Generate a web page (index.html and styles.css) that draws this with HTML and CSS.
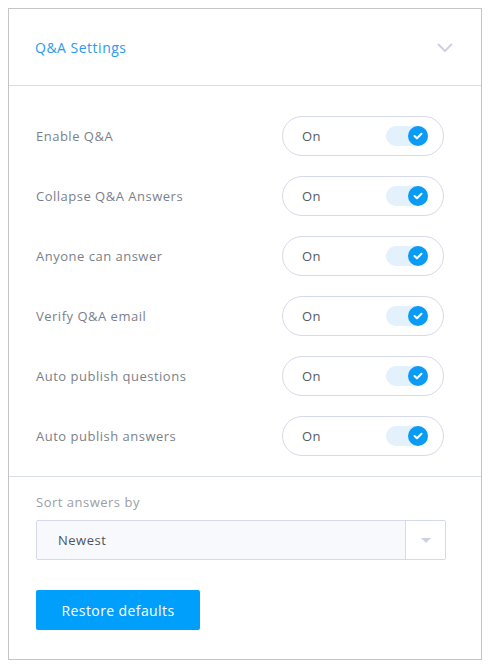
FILE: index.html
```html
<!DOCTYPE html>
<html lang="en">
<head>
    <meta charset="UTF-8">
    <meta name="viewport" content="width=device-width, initial-scale=1.0">
    <title>Q&amp;A Settings</title>
    <link rel="stylesheet" href="styles.css">
</head>
<body>

    <div class="card">

        <!-- Header -->
        <div class="card-header">
            <h2 class="card-title">Q&amp;A Settings</h2>
            <svg class="chevron" width="16" height="9" viewBox="0 0 16 9">
                <path d="M1 1 L8 8 L15 1" fill="none" stroke="#cdd1e6" stroke-width="2"/>
            </svg>
        </div>

        <!-- Toggles -->
        <div class="settings">
            <div class="setting-row">
                <span class="setting-label">Enable Q&amp;A</span>
                <div class="toggle">
                    <span class="toggle-text">On</span>
                    <span class="switch"><span class="knob"><svg width="10" height="8" viewBox="0 0 10 8"><path d="M1.5 4 L4 6.3 L8.5 1.7" fill="none" stroke="#fff" stroke-width="2" stroke-linecap="round" stroke-linejoin="round"/></svg></span></span>
                </div>
            </div>
            <div class="setting-row">
                <span class="setting-label">Collapse Q&amp;A Answers</span>
                <div class="toggle">
                    <span class="toggle-text">On</span>
                    <span class="switch"><span class="knob"><svg width="10" height="8" viewBox="0 0 10 8"><path d="M1.5 4 L4 6.3 L8.5 1.7" fill="none" stroke="#fff" stroke-width="2" stroke-linecap="round" stroke-linejoin="round"/></svg></span></span>
                </div>
            </div>
            <div class="setting-row">
                <span class="setting-label">Anyone can answer</span>
                <div class="toggle">
                    <span class="toggle-text">On</span>
                    <span class="switch"><span class="knob"><svg width="10" height="8" viewBox="0 0 10 8"><path d="M1.5 4 L4 6.3 L8.5 1.7" fill="none" stroke="#fff" stroke-width="2" stroke-linecap="round" stroke-linejoin="round"/></svg></span></span>
                </div>
            </div>
            <div class="setting-row">
                <span class="setting-label">Verify Q&amp;A email</span>
                <div class="toggle">
                    <span class="toggle-text">On</span>
                    <span class="switch"><span class="knob"><svg width="10" height="8" viewBox="0 0 10 8"><path d="M1.5 4 L4 6.3 L8.5 1.7" fill="none" stroke="#fff" stroke-width="2" stroke-linecap="round" stroke-linejoin="round"/></svg></span></span>
                </div>
            </div>
            <div class="setting-row">
                <span class="setting-label">Auto publish questions</span>
                <div class="toggle">
                    <span class="toggle-text">On</span>
                    <span class="switch"><span class="knob"><svg width="10" height="8" viewBox="0 0 10 8"><path d="M1.5 4 L4 6.3 L8.5 1.7" fill="none" stroke="#fff" stroke-width="2" stroke-linecap="round" stroke-linejoin="round"/></svg></span></span>
                </div>
            </div>
            <div class="setting-row">
                <span class="setting-label">Auto publish answers</span>
                <div class="toggle">
                    <span class="toggle-text">On</span>
                    <span class="switch"><span class="knob"><svg width="10" height="8" viewBox="0 0 10 8"><path d="M1.5 4 L4 6.3 L8.5 1.7" fill="none" stroke="#fff" stroke-width="2" stroke-linecap="round" stroke-linejoin="round"/></svg></span></span>
                </div>
            </div>
        </div>

        <!-- Sort + restore -->
        <div class="card-footer">
            <div class="field-label">Sort answers by</div>
            <div class="select">
                <span class="select-value">Newest</span>
                <span class="select-arrow"><span class="triangle"></span></span>
            </div>
            <button type="button" class="btn-restore">Restore defaults</button>
        </div>

    </div>

</body>
</html>
```

FILE: styles.css
```css
body {
    margin: 8px;
    font-family: "Open Sans", Arial, sans-serif;
    letter-spacing: 0.5px;
    background: #fff;
}
.card {
    height: 652px;
    box-sizing: border-box;
    background: #fff;
    border: 1px solid #c4c4c4;
    box-shadow: 0 0 4px rgba(0, 0, 0, 0.45);
}
.card-header {
    height: 77px;
    box-sizing: border-box;
    border-bottom: 1px solid #d9dcec;
    display: flex;
    align-items: center;
    justify-content: space-between;
    padding: 0 28px 0 26px;
}
.card-title {
    margin: 0;
    font-size: 14px;
    font-weight: 400;
    color: #2a9af0;
}
.chevron {
    display: block;
}
.settings {
    padding: 30px 37px 20px 27px;
    border-bottom: 1px solid #d9dcec;
    display: flex;
    flex-direction: column;
    gap: 20px;
}
.setting-row {
    display: flex;
    align-items: center;
    justify-content: space-between;
    height: 40px;
}
.setting-label {
    font-size: 13px;
    color: #7b7f8b;
}
.toggle {
    width: 162px;
    height: 40px;
    box-sizing: border-box;
    border: 1px solid #d6d9ea;
    border-radius: 20px;
    display: flex;
    align-items: center;
    justify-content: space-between;
    padding: 0 15px 0 19px;
}
.toggle-text {
    font-size: 13px;
    color: #555a63;
}
.switch {
    width: 42px;
    height: 20px;
    border-radius: 10px;
    background: #e2f1fc;
    display: flex;
    justify-content: flex-end;
}
.knob {
    width: 20px;
    height: 20px;
    border-radius: 50%;
    background: #0a9bf5;
    display: flex;
    align-items: center;
    justify-content: center;
}
.knob svg {
    display: block;
}
.card-footer {
    padding: 16px 35px 0 27px;
}
.field-label {
    font-size: 13px;
    color: #9b9ea6;
    line-height: 18px;
    margin-bottom: 9px;
}
.select {
    height: 40px;
    box-sizing: border-box;
    border: 1px solid #d6d9ea;
    border-radius: 2px;
    background: #f8f9fd;
    display: flex;
    align-items: stretch;
}
.select-value {
    flex: 1;
    display: flex;
    align-items: center;
    padding-left: 21px;
    font-size: 13px;
    color: #4e535c;
}
.select-arrow {
    width: 39px;
    border-left: 1px solid #d6d9ea;
    background: #fff;
    display: flex;
    align-items: center;
    justify-content: center;
}
.triangle {
    width: 0;
    height: 0;
    border-left: 5px solid transparent;
    border-right: 5px solid transparent;
    border-top: 5px solid #cdd1e3;
}
.btn-restore {
    margin-top: 30px;
    width: 164px;
    height: 40px;
    border: none;
    border-radius: 2px;
    background: #009ffb;
    color: #fff;
    font-family: "Open Sans", Arial, sans-serif;
    font-size: 14px;
    letter-spacing: 0.4px;
    padding: 0;
}
```
